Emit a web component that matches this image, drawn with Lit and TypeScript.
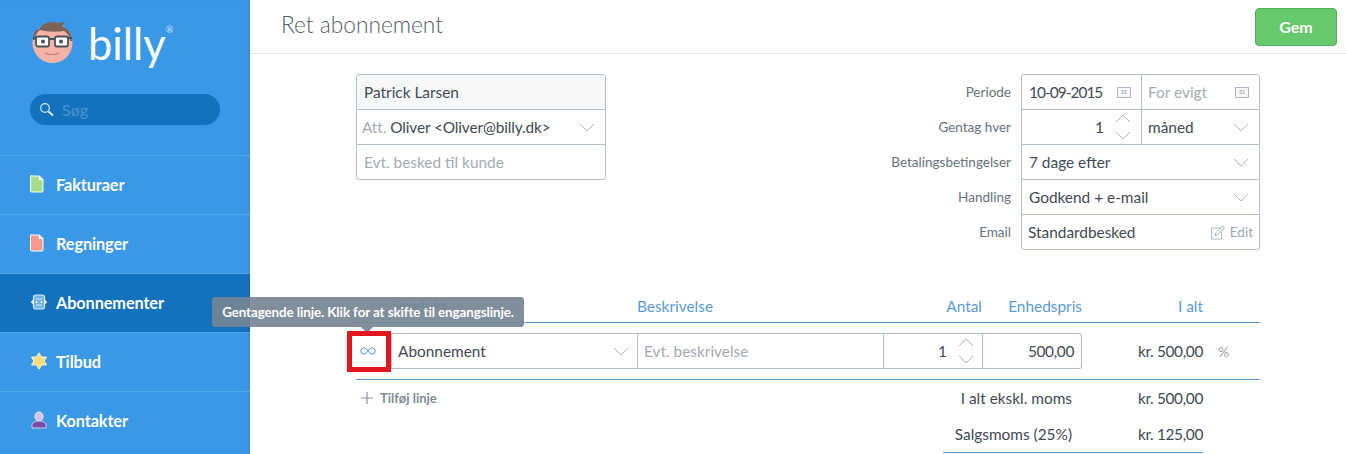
import { LitElement, html, css, svg } from "lit";
import { customElement } from "lit/decorators.js";

const down = html`<svg class="chev" width="16" height="9" viewBox="0 0 16 9"><path d="M1 1l7 7 7-7" fill="none" stroke="#a8b4bf" stroke-width="1"/></svg>`;
const up = html`<svg class="chev" width="16" height="9" viewBox="0 0 16 9"><path d="M1 8l7-7 7 7" fill="none" stroke="#a8b4bf" stroke-width="1"/></svg>`;
const stepper = html`<span class="stepper">${up}${down}</span>`;
const cal = html`<span class="cal">31</span>`;

const docIcon = (fill: string) => svg`<svg width="14" height="18" viewBox="0 0 14 18"><path d="M1.500 1h8l3.500 3.500v11.500a1 1 0 0 1-1 1h-10.500a1 1 0 0 1-1-1v-14.500a1 1 0 0 1 1-1z" fill="${fill}" stroke="#fff" stroke-width="1"/><path d="M9 .7v4.300h4.300z" fill="#fff"/></svg>`;

const navItems = [
  { label: "Fakturaer", icon: docIcon("#a4de8a") },
  { label: "Regninger", icon: docIcon("#f79a8e") },
  {
    label: "Abonnementer",
    active: true,
    icon: svg`<svg width="18" height="18" viewBox="0 0 18 18"><rect x="3.500" y="2" width="11" height="14" rx="2.500" fill="#6fb2e8" stroke="#d9ecfa" stroke-width="1.200"/><path d="M3.500 6L.8 9l2.700 3zM14.500 6l2.700 3-2.700 3z" fill="#e6f2fb"/><path d="M6 6h6M6 12h6" stroke="#d9ecfa" stroke-width="1"/><circle cx="6.500" cy="9" r="1" fill="#fff"/><circle cx="11.500" cy="9" r="1" fill="#fff"/></svg>`,
  },
  {
    label: "Tilbud",
    icon: svg`<svg width="18" height="18" viewBox="0 0 18 18"><path d="M9 .8l2.600 4.200 4.900.1-2.400 3.900 2.400 3.900-4.900.1L9 17.200l-2.600-4.200-4.900-.1 2.400-3.900-2.400-3.900 4.900-.1z" fill="#fbdc7c" stroke="#fdf6df" stroke-width="1"/></svg>`,
  },
  {
    label: "Kontakter",
    icon: svg`<svg width="18" height="18" viewBox="0 0 18 18"><ellipse cx="9" cy="5.500" rx="4" ry="4.500" fill="#d7c0ee" stroke="#fff" stroke-width=".8"/><path d="M2 17v-2.500c0-2.800 3-4.500 7-4.500s7 1.700 7 4.500v2.500z" fill="#7a4aa8" stroke="#f0e8f8" stroke-width=".8"/></svg>`,
  },
];

@customElement("app-root")
export class AppRoot extends LitElement {
  static styles = css`
    :host {
      display: block;
      width: 1346px;
      height: 454px;
      overflow: hidden;
      position: relative;
      background: #fff;
      font-family: "Lato", "Liberation Sans", sans-serif;
      font-size: 15.4px;
      color: #3f4a54;
    }
    * { box-sizing: border-box; }
    .page { display: flex; height: 454px; }
    .side {
      width: 250px;
      flex: none;
      background: #3a99e6;
      box-shadow: inset -3px 0 3px -2px #348cd3;
    }
    .brand { height: 155px; padding: 20px 0 0 30px; }
    .logo { display: flex; align-items: flex-start; height: 74px; }
    .word {
      font-size: 43.500px;
      font-weight: 400;
      color: #fff;
      line-height: 47px;
      margin-left: 13px;
    }
    .reg { font-size: 9px; color: #cfe6f8; margin: 5px 0 0 0; line-height: 10px; }
    .search {
      width: 190px;
      height: 31px;
      border-radius: 16px;
      background: #1272bd;
      display: flex;
      align-items: center;
      padding-left: 9px;
      gap: 8px;
      color: #4d96d1;
      font-size: 16px;
    }
    .nav {
      height: 59px;
      border-top: 1px solid #52a7ea;
      display: flex;
      align-items: center;
      padding: 0 0 2px 30px;
      color: #fff;
      font-size: 16.3px;
      font-weight: 700;
      letter-spacing: -0.1px;
    }
    .nav.active { background: #1272bd; border-top-color: #5aa5e0; box-shadow: inset -3px 0 3px -2px #0f66aa; }
    .navicon { width: 26px; display: flex; justify-content: flex-start; }
    .main { flex: 1; min-width: 0; }
    .top {
      height: 54px;
      border-bottom: 1px solid #e3e6e9;
      display: flex;
      align-items: center;
      justify-content: space-between;
      padding: 0 9px 2px 31px;
    }
    h1 { margin: 0 0 2px; font-size: 22.7px; font-weight: 300; color: #55606a; }
    .gem {
      width: 82px;
      height: 38px;
      background: #66c96c;
      border: 1px solid #55b05c;
      border-radius: 4px;
      color: #fff;
      font: inherit;
      font-size: 16px;
      font-weight: 700;
      margin-top: 2px;
    }
    .content { padding: 20px 86px 0 106px; }
    .forms { display: flex; justify-content: space-between; height: 219px; align-items: flex-start; }
    .box {
      border: 1px solid #b3c0cc;
      border-radius: 3px;
      background: #fff;
    }
    .cust { width: 250px; }
    .row {
      height: 35px;
      border-top: 1px solid #b3c0cc;
      display: flex;
      align-items: center;
      padding: 0 10px 0 7px;
      justify-content: space-between;
    }
    .row:first-child { border-top: 0; height: 34px; }
    .row.name { background: #f6f8fa; border-radius: 3px 3px 0 0; color: #3f4a54; }
    .row.att-row { padding-left: 5px; }
    .row.std { padding-left: 6px; }
    .muted { color: #a4abb2; }
    .att { color: #a4abb2; margin-right: 4px; }
    .mail { letter-spacing: -0.12px; }
    .settings { display: grid; grid-template-columns: auto 239px; column-gap: 10px; }
    .labels { display: grid; grid-auto-rows: 35px; justify-items: end; align-items: center; color: #66727d; font-size: 13.5px; }
    .split { padding: 0; display: grid; grid-template-columns: 119px 1fr; }
    .split > div { display: flex; align-items: center; justify-content: space-between; height: 100%; padding: 0 9px 0 7px; }
    .split > div:first-child { padding-right: 10px; }
    .split > div + div { border-left: 1px solid #b3c0cc; padding-left: 6px; padding-right: 10px; }
    .split > .num { justify-content: flex-end; gap: 11px; padding-right: 8px; }
    .date { letter-spacing: -0.95px; }
    .amt { letter-spacing: -0.35px; }
    .stepper { display: flex; flex-direction: column; gap: 8px; }
    .chev { display: block; }
    .cal {
      width: 14px;
      height: 11px;
      border: 1px solid #aab5bf;
      font-size: 5px;
      line-height: 9px;
      text-align: center;
      color: #7f8c97;
      background: #f6f8fa;
    }
    .cal.in { margin-right: 1px; }
    .edit { display: flex; align-items: center; gap: 5px; color: #9aa4ad; font-size: 13.5px; margin-right: -4px; }
    .grid {
      display: grid;
      grid-template-columns: 35px 247px 246px 99px 99px 121px 57px;
      align-items: center;
    }
    .head {
      height: 30px;
      padding-top: 4px;
      border-bottom: 1px solid #5397cf;
      color: #5a9bd5;
      align-items: start;
    }
    .r { text-align: right; }
    .head span { display: block; }
    .head .prod { padding-left: 2px; }
    .head .desc { margin-left: -1px; }
    .head .antal { padding-right: 1px; }
    .line { height: 57px; border-bottom: 1px solid #5397cf; }
    .cell {
      height: 36px;
      border: 1px solid #b3c0cc;
      border-left: 0;
      display: flex;
      align-items: center;
      padding: 0 6px;
      justify-content: space-between;
    }
    .cell.first { border-left: 1px solid #b3c0cc; padding-right: 8px; }
    .infin {
      height: 36px;
      display: flex;
      align-items: center;
      justify-content: center;
      padding-right: 11px;
    }
    .cell.qty { justify-content: flex-end; gap: 11px; padding-right: 8px; }
    .cell.price { justify-content: flex-end; border-radius: 0 3px 3px 0; padding-right: 7px; }
    .pct { color: #97a2ab; padding-left: 15px; font-size: 14px; }
    .foot { display: flex; justify-content: space-between; }
    .add { color: #7e8a94; font-size: 13px; font-weight: 700; display: flex; align-items: center; gap: 6px; padding-left: 4px; height: 36px; }
    .totals { width: 260px; margin-right: 57px; }
    .trow { display: grid; grid-template-columns: 1fr 131px; height: 36px; align-items: center; text-align: right; }
    .trow:last-child { border-bottom: 1px solid #5397cf; height: 37px; }
    .tooltip {
      position: absolute;
      left: 212px;
      top: 297px;
      width: 312px;
      height: 30px;
      border-radius: 3px;
      background: rgba(117, 133, 147, 0.92);
      color: #fff;
      font-size: 13.4px;
      font-weight: 700;
      letter-spacing: -0.1px;
      display: flex;
      align-items: center;
      justify-content: center;
    }
    .tooltip::after {
      content: "";
      position: absolute;
      left: 149px;
      top: 30px;
      border: 6px solid transparent;
      border-top-color: rgba(117, 133, 147, 0.92);
      border-bottom: 0;
    }
    .mark {
      position: absolute;
      left: 347px;
      top: 331px;
      width: 44px;
      height: 41px;
      border: 5px solid #e0161f;
    }
  `;

  render() {
    return html`
      <div class="page">
        <aside class="side">
          <div class="brand">
            <div class="logo">
              <svg width="45" height="46" viewBox="0 0 45 46">
                <circle cx="22.500" cy="23" r="20" fill="#f6b4a6" />
                <path d="M3 20c0-6 2-10 6-11 3-5 11-9 18-6l8-1-3 4c6 2 10 8 10 15l-2 0c0-5-3-8-6-10-7 1-17 1-24-1-3 2-5 6-5 10z" fill="#7c6358" />
                <rect x="6" y="16.500" width="13" height="10" rx="2" fill="#fff" stroke="#4a5258" stroke-width="1.800" />
                <rect x="25" y="16.500" width="13" height="10" rx="2" fill="#fff" stroke="#4a5258" stroke-width="1.800" />
                <path d="M19 19h6M3 18h3M38 18h4" stroke="#4a5258" stroke-width="1.800" />
                <circle cx="13" cy="21.500" r="2" fill="#4a5258" />
                <circle cx="31" cy="21.500" r="2" fill="#4a5258" />
                <path d="M15 33c4 2 10 2 14 0" fill="none" stroke="#b5766a" stroke-width="1.100" />
              </svg>
              <span class="word">billy</span><span class="reg">®</span>
            </div>
            <div class="search">
              <svg width="15" height="15" viewBox="0 0 15 15"><circle cx="6" cy="6" r="4.300" fill="none" stroke="#dcecf9" stroke-width="1.200" /><path d="M9.500 9.500l4.500 4" stroke="#dcecf9" stroke-width="2" /></svg>
              <span>Søg</span>
            </div>
          </div>
          ${navItems.map(
            (n) => html`<div class="nav ${n.active ? "active" : ""}"><span class="navicon">${n.icon}</span>${n.label}</div>`
          )}
        </aside>
        <main class="main">
          <header class="top">
            <h1>Ret abonnement</h1>
            <button class="gem">Gem</button>
          </header>
          <div class="content">
            <section class="forms">
              <div class="box cust">
                <div class="row name">Patrick Larsen</div>
                <div class="row att-row"><span class="mail"><span class="att">Att.</span>Oliver &lt;Oliver@billy.dk&gt;</span>${down}</div>
                <div class="row muted">Evt. besked til kunde</div>
              </div>
              <div class="settings">
                <div class="labels">
                  <span>Periode</span><span>Gentag hver</span><span>Betalingsbetingelser</span><span>Handling</span><span>Email</span>
                </div>
                <div class="box">
                  <div class="row split">
                    <div><span class="date">10-09-2015</span>${cal}</div>
                    <div><span class="muted">For evigt</span>${cal}</div>
                  </div>
                  <div class="row split">
                    <div class="num">1${stepper}</div>
                    <div>måned${down}</div>
                  </div>
                  <div class="row">7 dage efter${down}</div>
                  <div class="row">Godkend + e-mail${down}</div>
                  <div class="row std">Standardbesked
                    <span class="edit">
                      <svg width="15" height="15" viewBox="0 0 15 15"><path d="M11 3H1.500v11h10V7" fill="none" stroke="#aab5bf" /><path d="M5 10.500l.5-2.500L13 1l1.500 1.500L7.500 10z" fill="none" stroke="#aab5bf" /></svg>
                      Edit
                    </span>
                  </div>
                </div>
              </div>
            </section>
            <section>
              <div class="grid head">
                <span></span><span class="prod">Produkt</span><span class="desc">Beskrivelse</span>
                <span class="r antal">Antal</span><span class="r">Enhedspris</span><span class="r">I alt</span><span></span>
              </div>
              <div class="grid line">
                <div class="infin">
                  <svg width="16" height="8" viewBox="0 0 16 8"><path d="M8 4C6.500 1.500 5 1 3.800 1a3 3 0 0 0 0 6C5 7 6.500 6.500 8 4s3-3 4.200-3a3 3 0 0 1 0 6C11 7 9.500 6.500 8 4z" fill="none" stroke="#4d94d4" stroke-width="1" /></svg>
                </div>
                <div class="cell first">Abonnement${down}</div>
                <div class="cell muted">Evt. beskrivelse</div>
                <div class="cell qty">1${stepper}</div>
                <div class="cell price"><span class="amt">500,00</span></div>
                <div class="r amt">kr. 500,00</div>
                <div class="pct">%</div>
              </div>
              <div class="foot">
                <div class="add">
                  <svg width="14" height="14" viewBox="0 0 14 14"><path d="M7 1v12M1 7h12" stroke="#8a959f" stroke-width="1.200" /></svg>
                  Tilføj linje
                </div>
                <div class="totals">
                  <div class="trow"><span>I alt ekskl. moms</span><span class="amt">kr. 500,00</span></div>
                  <div class="trow"><span>Salgsmoms (25%)</span><span class="amt">kr. 125,00</span></div>
                </div>
              </div>
            </section>
          </div>
        </main>
      </div>
      <div class="tooltip">Gentagende linje. Klik for at skifte til engangslinje.</div>
      <div class="mark"></div>
    `;
  }
}
